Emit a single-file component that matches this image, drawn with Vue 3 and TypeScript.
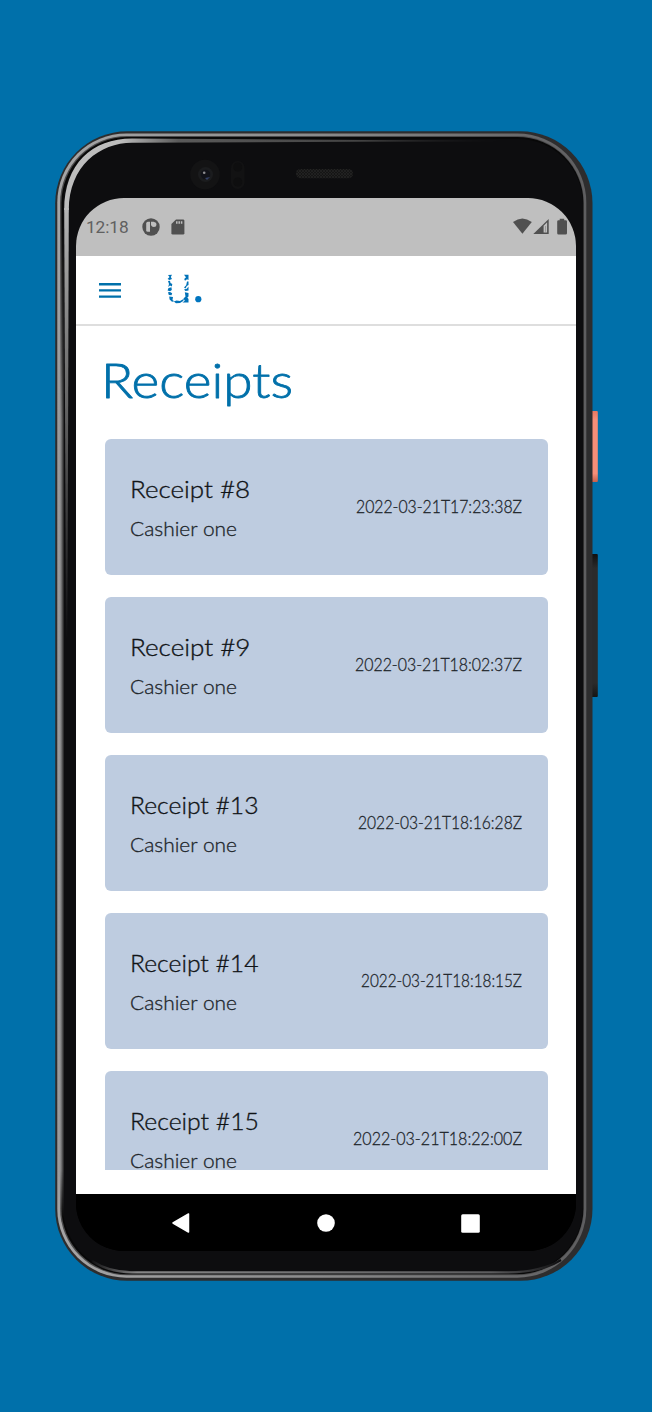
<script setup lang="ts">
interface Receipt {
  title: string
  titleWidth: number
  cashier: string
  date: string
  dateWidth: number
}

const receipts: Receipt[] = [
  { title: 'Receipt #8', titleWidth: 120, cashier: 'Cashier one', date: '2022-03-21T17:23:38Z', dateWidth: 166 },
  { title: 'Receipt #9', titleWidth: 120.5, cashier: 'Cashier one', date: '2022-03-21T18:02:37Z', dateWidth: 167 },
  { title: 'Receipt #13', titleWidth: 128.5, cashier: 'Cashier one', date: '2022-03-21T18:16:28Z', dateWidth: 164 },
  { title: 'Receipt #14', titleWidth: 128.5, cashier: 'Cashier one', date: '2022-03-21T18:18:15Z', dateWidth: 161 },
  { title: 'Receipt #15', titleWidth: 129, cashier: 'Cashier one', date: '2022-03-21T18:22:00Z', dateWidth: 169 },
]
</script>

<template>
  <main class="stage">
    <div class="device">
      <svg class="shell" viewBox="55 131 543 1150" width="543" height="1150" aria-hidden="true">
        <defs>
          <linearGradient id="metal" x1="0" y1="0" x2="1" y2="0">
            <stop offset="0" stop-color="#a5a5a6" />
            <stop offset=".5" stop-color="#8a8a8b" />
            <stop offset="1" stop-color="#5e5e60" />
          </linearGradient>
          <linearGradient id="side" x1="0" y1="0" x2="1" y2="0">
            <stop offset="0" stop-color="#6d6d6e" />
            <stop offset=".25" stop-color="#a2a2a3" />
            <stop offset=".55" stop-color="#858586" />
            <stop offset="1" stop-color="#1c1c1d" />
          </linearGradient>
          <linearGradient id="sideFade" x1="0" y1="0" x2="0" y2="1">
            <stop offset="0" stop-color="#fff" stop-opacity="0" />
            <stop offset=".2" stop-color="#fff" />
            <stop offset=".95" stop-color="#fff" />
            <stop offset="1" stop-color="#fff" stop-opacity="0" />
          </linearGradient>
          <mask id="sideMask" maskUnits="userSpaceOnUse" x="56" y="220" width="12" height="1000">
            <rect x="56" y="220" width="12" height="1000" fill="url(#sideFade)" />
          </mask>
          <linearGradient id="shineTop" gradientUnits="userSpaceOnUse" x1="120" y1="0" x2="510" y2="0">
            <stop offset="0" stop-color="#bdbdbd" />
            <stop offset=".15" stop-color="#5a5a5a" />
            <stop offset=".6" stop-color="#444" />
            <stop offset="1" stop-color="#0d0d0f" />
          </linearGradient>
          <linearGradient id="shineLeft" gradientUnits="userSpaceOnUse" x1="0" y1="200" x2="0" y2="640">
            <stop offset="0" stop-color="#b9b9b9" />
            <stop offset=".35" stop-color="#777" />
            <stop offset="1" stop-color="#0d0d0f" />
          </linearGradient>
          <linearGradient id="shineBottom" gradientUnits="userSpaceOnUse" x1="90" y1="0" x2="562" y2="0">
            <stop offset="0" stop-color="#0d0d0f" />
            <stop offset=".1" stop-color="#858586" />
            <stop offset=".85" stop-color="#5c5c5e" />
            <stop offset="1" stop-color="#0d0d0f" />
          </linearGradient>
          <linearGradient id="coral" x1="0" y1="0" x2="0" y2="1">
            <stop offset="0" stop-color="#e87861" />
            <stop offset=".12" stop-color="#f68e78" />
            <stop offset=".88" stop-color="#f68e78" />
            <stop offset="1" stop-color="#c85f4b" />
          </linearGradient>
          <linearGradient id="volume" x1="0" y1="0" x2="0" y2="1">
            <stop offset="0" stop-color="#101010" />
            <stop offset=".1" stop-color="#2b2b2b" />
            <stop offset=".9" stop-color="#2b2b2b" />
            <stop offset="1" stop-color="#151515" />
          </linearGradient>
          <pattern id="mesh" width="3" height="3" patternUnits="userSpaceOnUse">
            <rect width="3" height="3" fill="#151515" />
            <path d="M0 0l3 3M3 0L0 3" stroke="#252525" stroke-width=".7" />
          </pattern>
        </defs>
        <rect x="590" y="411" width="7.8" height="71" rx="1" fill="url(#coral)" />
        <rect x="590" y="554" width="7.8" height="143" rx="1" fill="url(#volume)" />
        <rect x="55.2" y="131.3" width="537.3" height="1149.5" rx="72" fill="#2d2d2e" />
        <rect x="57.3" y="133.4" width="529" height="1144.3" rx="69" fill="url(#metal)" />
        <rect x="60" y="136" width="524" height="1139.2" rx="67" fill="#4b4b4c" />
        <rect x="61.4" y="137" width="522" height="1137.2" rx="66" fill="#080808" />
        <rect x="63" y="139" width="520" height="1133.5" rx="65" fill="#0d0d0f" />
        <rect x="57" y="220" width="7" height="1000" fill="url(#side)" mask="url(#sideMask)" />
        <path d="M92 1261C104 1269 116 1272.3 132 1272.3H508C532 1272.3 548 1268 561 1260" fill="none" stroke="url(#shineBottom)" stroke-width="2.2" />
        <path d="M64.2 208H68.8L67.4 640H66Z" fill="url(#shineLeft)" />
        <path d="M64.2 210C64.2 164 92 138.5 132 138.5L510 141L132 142.8C100 142.8 68.8 166 68.8 210Z" fill="url(#shineTop)" />
        <circle cx="205" cy="174.5" r="14.8" fill="#131314" />
        <circle cx="205.5" cy="174.5" r="7.5" fill="#1b1c1e" />
        <circle cx="205.5" cy="174.5" r="4.8" fill="#111219" />
        <path d="M205 178l5-1-3 3z" fill="#344066" />
        <circle cx="204.2" cy="172.8" r="1.3" fill="#8d8d90" />
        <rect x="231" y="161" width="13.5" height="28" rx="6.5" fill="#121213" />
        <circle cx="237.8" cy="167" r="4.5" fill="#0e0e0f" />
        <circle cx="237.8" cy="182" r="4.5" fill="#0e0e0f" />
        <rect x="296" y="169" width="57" height="9.3" rx="4.6" fill="url(#mesh)" />
      </svg>

      <div class="screen">
        <header class="status">
          <span class="clock">12:18</span>
          <svg class="s-app" width="18" height="18" viewBox="0 0 18 18">
            <circle cx="9" cy="9" r="8.7" fill="#505050" />
            <path d="M4.2 5.4Q4.2 3.8 5.8 3.8H8V13.7H5.8Q4.2 13.7 4.2 12.2Z" fill="#bfbfbf" />
            <circle cx="11.9" cy="6.4" r="2.5" fill="#bfbfbf" />
            <path d="M9 3.8H11.9V7.4H9Z" fill="#bfbfbf" />
          </svg>
          <svg class="s-sd" width="14" height="16" viewBox="0 0 14 16">
            <path d="M5 .4H12Q13.4.4 13.4 1.8V14.2Q13.4 15.6 12 15.6H1.8Q.4 15.6.4 14.2V5Z" fill="#505050" />
            <path d="M5.8 2.3V4.8M8.2 2.3V4.8M10.6 2.3V4.8" stroke="#bfbfbf" stroke-width="1.5" />
          </svg>
          <span class="gap"></span>
          <svg class="s-signal" width="54" height="18" viewBox="513 217 54 18">
            <path d="M513 222Q522.3 215 531.8 222L522.4 233.8Z" fill="#505050" />
            <path d="M548.7 219V234H533.3Z" fill="#505050" />
            <path d="M543.6 225.7L547.1 222.2V232.4H543.6Z" fill="#bfbfbf" />
            <path d="M545.2 226H546V231.7H545.2Z" fill="#909090" />
            <path d="M559.7 218.8H564.2V220.2H565.6Q567 220.2 567 221.6V233.2Q567 234.6 565.6 234.6H558.6Q557.2 234.6 557.2 233.2V221.6Q557.2 220.2 558.6 220.2H559.7Z" fill="#505050" />
          </svg>
        </header>

        <div class="appbar">
          <svg class="menu" width="22" height="16" viewBox="0 0 22 16">
            <path d="M0 2.2H22M0 8.4H22M0 14.6H22" stroke="#0070aa" stroke-width="2.4" />
          </svg>
          <svg class="logo" width="36" height="30" viewBox="167 274 36 30">
            <g fill="#0072b8">
              <path d="M168 275L172 274.8L170.8 277L172 279L169.5 280L167.6 279L169.5 277Z" />
              <path d="M168 281L170 280.8L170.5 283L172.3 284L171.8 286.5L170 285.5L168.2 287L169 284Z" />
              <path d="M168.5 288L171.5 287.3L171.8 290L170 291.2L167.6 290.5Z" />
              <path d="M168 292.2L170 292L172.2 293.3L171.5 295.2L168.8 295Z" />
              <path d="M169.2 296.5L173 297L172.5 300L174.3 301.2L172 301.8L169.6 299.5Z" />
              <path d="M184 274.8H188.5V280L187 279.2L185 280.8L184.2 279L186 277.2Z" />
              <path d="M187 281.5H188.5V285L186.8 286L185.5 288.5L184 287.5L186.2 285.2Z" />
              <path d="M188.5 286.5V290.5L185.5 291L184 289.5L186.8 288.8Z" />
              <path d="M184.8 292.2L188.5 293V296.5L187.3 297.5L188.5 299V302.5H182.5L184.8 300.8L183.5 298.5L185.5 296.5Z" />
              <path d="M173.8 301.5L176.5 300.6L180 301L184 298.8L183.2 301L180 303L176 303.3Z" />
            </g>
            <circle cx="198.3" cy="299.2" r="3.1" fill="#0075bf" />
          </svg>
        </div>

        <section class="content">
          <h1>
            <svg width="200" height="56">
              <text x="0" y="41.5" textLength="192" lengthAdjust="spacingAndGlyphs">Receipts</text>
            </svg>
          </h1>
          <ul class="list">
            <li v-for="receipt in receipts" :key="receipt.title" class="card">
              <svg class="who" width="140" height="76">
                <text class="title" x="0" y="28.5" :textLength="receipt.titleWidth" lengthAdjust="spacingAndGlyphs">{{ receipt.title }}</text>
                <text class="cashier" x="0" y="66.5" textLength="107" lengthAdjust="spacingAndGlyphs">{{ receipt.cashier }}</text>
              </svg>
              <svg class="when" :width="receipt.dateWidth + 2" height="24">
                <text x="1" y="18" :textLength="receipt.dateWidth" lengthAdjust="spacingAndGlyphs">{{ receipt.date }}</text>
              </svg>
            </li>
          </ul>
        </section>

        <nav class="navbar">
          <svg width="18" height="20" viewBox="0 0 18 20"><path d="M16.5 1V19L1 10Z" fill="#fff" stroke="#fff" stroke-width="1.5" stroke-linejoin="round" /></svg>
          <svg width="18" height="18" viewBox="0 0 18 18"><circle cx="9" cy="9" r="8.8" fill="#fff" /></svg>
          <svg width="19" height="19" viewBox="0 0 19 19"><rect x=".2" y=".2" width="18.6" height="18.6" rx="1.5" fill="#fff" /></svg>
        </nav>
      </div>
    </div>
  </main>
</template>

<style>
body {
  margin: 0;
  background: #0070aa;
}
</style>

<style scoped>
.stage {
  box-sizing: border-box;
  width: 652px;
  height: 1412px;
  padding: 131px 0 0 55px;
  background: #0070aa;
  overflow: hidden;
}
.device {
  position: relative;
  box-sizing: border-box;
  width: 543px;
  height: 1150px;
  padding: 67px 0 0 21px;
}
svg {
  display: block;
  flex: none;
  overflow: visible;
}
.shell {
  position: absolute;
  inset: 0;
}
.screen {
  position: relative;
  display: flex;
  flex-direction: column;
  width: 499.5px;
  height: 1053px;
  border-radius: 48px;
  background: #000;
  overflow: hidden;
}
.status {
  display: flex;
  align-items: center;
  box-sizing: border-box;
  height: 58px;
  padding: 0 8.5px 0 10px;
  background: #bfbfbf;
}
.clock {
  width: 56px;
  font: 400 17.3px/20px Roboto, sans-serif;
  letter-spacing: -0.1px;
  color: #606060;
}
.s-sd {
  margin-left: 11px;
}
.s-signal {
  margin-top: -2px;
}
.gap {
  flex: 1;
}
.appbar {
  display: flex;
  align-items: center;
  gap: 46px;
  box-sizing: border-box;
  height: 70px;
  padding: 0 23px;
  border-bottom: 2px solid #dedede;
  background: #fff;
}
.logo {
  margin-top: -2px;
}
.content {
  flex: 1;
  min-height: 0;
  padding: 30px 28px 0 29px;
  background: #fff;
}
h1 {
  margin: 0 0 27px -4.5px;
  font: 300 47px/56px Lato, sans-serif;
}
h1 text {
  fill: #0070aa;
  stroke: #0070aa;
  stroke-width: 0.8px;
  stroke-linejoin: round;
}
.list {
  display: flex;
  flex-direction: column;
  gap: 22px;
  height: 731px;
  margin: 0;
  padding: 0;
  list-style: none;
  overflow: hidden;
}
.card {
  display: flex;
  flex: none;
  align-items: center;
  justify-content: space-between;
  box-sizing: border-box;
  height: 136px;
  padding: 0 25px 0 24.5px;
  border-radius: 6px;
  background: #becce0;
}
text {
  font-family: Lato, sans-serif;
  font-weight: 300;
}
.title {
  font-size: 24px;
  fill: #101316;
  stroke: #101316;
  stroke-width: 0.35px;
}
.cashier {
  font-size: 19.3px;
  fill: #20252a;
  stroke: #20252a;
  stroke-width: 0.3px;
}
.when {
  font-size: 17.5px;
  fill: #20252a;
  stroke: #20252a;
  stroke-width: 0.3px;
}
.navbar {
  display: grid;
  grid-template-columns: repeat(3, 145px);
  align-items: center;
  justify-content: center;
  justify-items: center;
  height: 57px;
  padding-top: 1px;
  box-sizing: border-box;
  background: #000;
}
</style>
